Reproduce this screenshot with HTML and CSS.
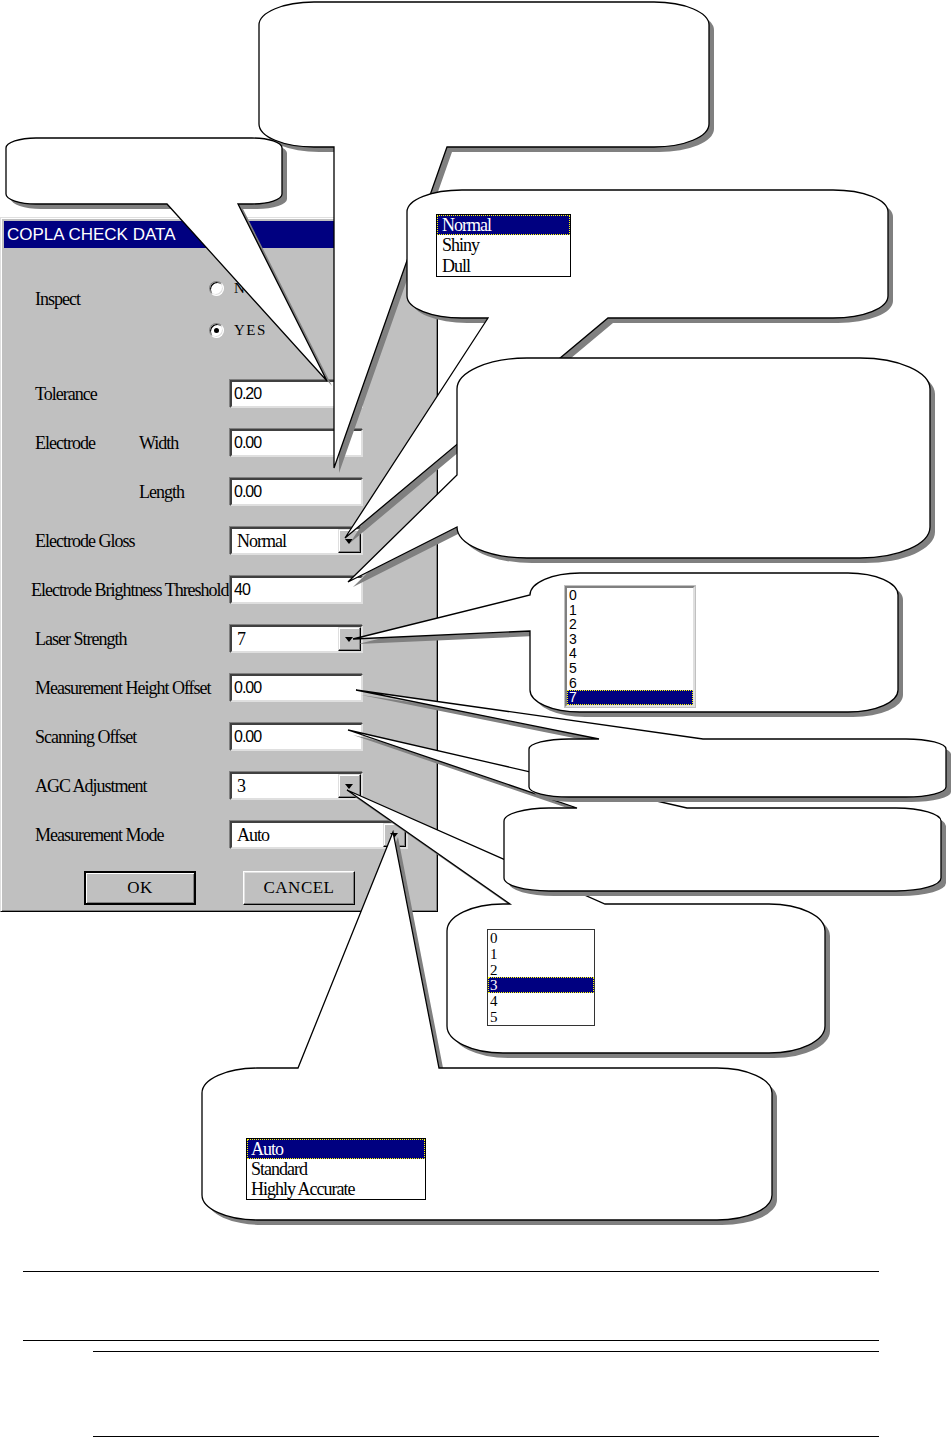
FILE: index.html
```html
<!DOCTYPE html>
<html lang="en">
<head>
  <meta charset="UTF-8" />
  <title>COPLA CHECK DATA</title>
  <link rel="stylesheet" href="styles.css">
</head>
<body>
  <div class="figure">
    <div class="dialog">
      <div class="titlebar">COPLA CHECK DATA</div>
      <div class="dlg-body">
        <div class="inspect-row">
          <span class="label inspect-label">Inspect</span>
          <div class="radios">
            <span class="radio"><span class="radio-dot"></span>NO</span>
            <span class="radio checked"><span class="radio-dot"></span>YES</span>
          </div>
        </div>

        <div class="fields">
          <span class="label">Tolerance</span>
          <div class="field">0.20</div>

          <span class="label"><span class="group">Electrode</span>Width</span>
          <div class="field">0.00</div>

          <span class="label sub">Length</span>
          <div class="field">0.00</div>

          <span class="label">Electrode Gloss</span>
          <div class="field select"><span class="value">Normal</span><span class="drop-btn"></span></div>

          <span class="label long">Electrode Brightness Threshold</span>
          <div class="field">40</div>

          <span class="label">Laser Strength</span>
          <div class="field select"><span class="value">7</span><span class="drop-btn"></span></div>

          <span class="label">Measurement Height Offset</span>
          <div class="field">0.00</div>

          <span class="label">Scanning Offset</span>
          <div class="field">0.00</div>

          <span class="label">AGC Adjustment</span>
          <div class="field select"><span class="value">3</span><span class="drop-btn"></span></div>

          <span class="label">Measurement Mode</span>
          <div class="field select wide"><span class="value">Auto</span><span class="drop-btn"></span></div>
        </div>

        <div class="buttons">
          <button class="btn default">OK</button>
          <button class="btn">CANCEL</button>
        </div>
      </div>
    </div>

    <!-- callout balloons drawn over the dialog -->
    <svg class="callouts" width="952" height="1240" viewBox="0 0 952 1240">
      <defs>
        <path id="c-top" d="M 314 2 H 654 A 55 23 0 0 1 709 25 V 124 A 55 23 0 0 1 654 147 H 447 L 334 468 L 334 147 H 314 A 55 23 0 0 1 259 124 V 25 A 55 23 0 0 1 314 2 Z" />
        <path id="c-tol" d="M 36 138 H 252 A 30 10 0 0 1 282 148 V 194 A 30 10 0 0 1 252 204 H 238 L 327 381 L 167 204 H 36 A 30 10 0 0 1 6 194 V 148 A 30 10 0 0 1 36 138 Z" />
        <path id="c-gloss" d="M 462 190 H 833 A 55 22 0 0 1 888 212 V 296 A 55 22 0 0 1 833 318 H 608 L 345 538 L 488 318 H 462 A 55 22 0 0 1 407 296 V 212 A 55 22 0 0 1 462 190 Z" />
        <path id="c-bright" d="M 527 358 H 860 A 70 31 0 0 1 930 389 V 527 A 70 31 0 0 1 860 558 H 527 A 70 31 0 0 1 457 527 L 348 582 L 457 475 V 389 A 70 31 0 0 1 527 358 Z" />
        <path id="c-laser" d="M 580 573 H 848 A 50 22 0 0 1 898 595 V 690 A 50 22 0 0 1 848 712 H 580 A 50 22 0 0 1 530 690 V 631 L 353 639 L 530 595 A 50 22 0 0 1 580 573 Z" />
        <path id="c-agc" d="M 503 904 H 510 L 347 790 L 605 904 H 769 A 56 27 0 0 1 825 931 V 1026 A 56 27 0 0 1 769 1053 H 503 A 56 27 0 0 1 447 1026 V 931 A 56 27 0 0 1 503 904 Z" />
        <path id="c-scan" d="M 549 808 H 577 L 348 730 L 687 808 H 896 A 45 13 0 0 1 941 821 V 878 A 45 13 0 0 1 896 891 H 549 A 45 13 0 0 1 504 878 V 821 A 45 13 0 0 1 549 808 Z" />
        <path id="c-height" d="M 569 739 H 599 L 356 690 L 703 739 H 906 A 40 10 0 0 1 946 749 V 787 A 40 10 0 0 1 906 797 H 569 A 40 10 0 0 1 529 787 V 749 A 40 10 0 0 1 569 739 Z" />
        <path id="c-mode" d="M 257 1068 H 298 L 393 832 L 439 1068 H 717 A 55 25 0 0 1 772 1093 V 1195 A 55 25 0 0 1 717 1220 H 257 A 55 25 0 0 1 202 1195 V 1093 A 55 25 0 0 1 257 1068 Z" />
      </defs>
      <use href="#c-top" class="shade" transform="translate(5 5)" /><use href="#c-top" class="bubble" />
      <use href="#c-tol" class="shade" transform="translate(5 5)" /><use href="#c-tol" class="bubble" />
      <use href="#c-gloss" class="shade" transform="translate(5 5)" /><use href="#c-gloss" class="bubble" />
      <use href="#c-bright" class="shade" transform="translate(5 5)" /><use href="#c-bright" class="bubble" />
      <use href="#c-laser" class="shade" transform="translate(5 5)" /><use href="#c-laser" class="bubble" />
      <use href="#c-agc" class="shade" transform="translate(5 5)" /><use href="#c-agc" class="bubble" />
      <use href="#c-scan" class="shade" transform="translate(5 5)" /><use href="#c-scan" class="bubble" />
      <use href="#c-height" class="shade" transform="translate(5 5)" /><use href="#c-height" class="bubble" />
      <use href="#c-mode" class="shade" transform="translate(5 5)" /><use href="#c-mode" class="bubble" />
    </svg>

    <ul class="list list-gloss">
      <li class="sel">Normal</li>
      <li>Shiny</li>
      <li>Dull</li>
    </ul>

    <ul class="list list-laser">
      <li>0</li><li>1</li><li>2</li><li>3</li><li>4</li><li>5</li><li>6</li>
      <li class="sel">7</li>
    </ul>

    <ul class="list list-agc">
      <li>0</li><li>1</li><li>2</li>
      <li class="sel">3</li>
      <li>4</li><li>5</li>
    </ul>

    <ul class="list list-mode">
      <li class="sel">Auto</li>
      <li>Standard</li>
      <li>Highly Accurate</li>
    </ul>
  </div>

  <div class="rules">
    <div class="rule wide"></div>
    <div class="rule wide gap-a"></div>
    <div class="rule inner gap-b"></div>
    <div class="rule inner gap-c"></div>
  </div>
</body>
</html>
```

FILE: styles.css
```css
body {
  margin: 0;
  background: #fff;
  color: #000;
  font-family: "Liberation Serif", "Times New Roman", serif;
}
.figure {
  position: relative;
  height: 1271px;
  padding-top: 217px;
  box-sizing: border-box;
}

/* dialog window */
.dialog {
  width: 438px;
  box-sizing: border-box;
  background: #c0c0c0;
  border: 1px solid;
  border-color: #dfdfdf #000 #000 #dfdfdf;
  box-shadow: inset 1px 1px #fff, inset -1px -1px #808080;
  padding: 3px;
}
.titlebar {
  height: 27px;
  line-height: 27px;
  background: #000080;
  color: #fff;
  font-family: "Liberation Sans", Arial, sans-serif;
  font-size: 17px;
  padding-left: 3px;
}
.dlg-body {
  padding: 30px 0 3px 31px;
}
.label {
  font-size: 18px;
  letter-spacing: -1px;
  line-height: 20px;
  white-space: nowrap;
}
.label .group {
  display: inline-block;
  width: 104px;
}
.label.sub {
  padding-left: 104px;
}
.label.long {
  margin-left: -4px;
}

.inspect-row {
  display: flex;
  height: 62px;
  margin-bottom: 40px;
}
.inspect-label {
  width: 174px;
  margin-top: 11px;
}
.radios {
  display: flex;
  flex-direction: column;
  gap: 22px;
}
.radio {
  display: flex;
  align-items: center;
  height: 20px;
  font-family: "Liberation Serif", "Times New Roman", serif;
  font-size: 15px;
  letter-spacing: 1.5px;
}
.radio-dot {
  position: relative;
  width: 15px;
  height: 15px;
  box-sizing: border-box;
  border-radius: 50%;
  background: #fff;
  border: 1px solid;
  border-color: #808080 #fff #fff #808080;
  box-shadow: inset 1px 1px #000, inset -1px -1px #dfdfdf;
  margin-right: 10px;
}
.radio.checked .radio-dot::after {
  content: "";
  position: absolute;
  left: 4px;
  top: 4px;
  width: 5px;
  height: 5px;
  border-radius: 50%;
  background: #000;
}

.fields {
  display: grid;
  grid-template-columns: 195px auto;
  grid-auto-rows: 28px;
  row-gap: 21px;
  align-items: center;
  justify-items: start;
}
.field {
  width: 133px;
  height: 28px;
  box-sizing: border-box;
  background: #fff;
  border: 2px solid;
  border-color: #404040 #dfdfdf #dfdfdf #404040;
  box-shadow: -1px -1px #808080;
  padding-left: 2px;
  font-family: "Liberation Sans", Arial, sans-serif;
  font-size: 16px;
  letter-spacing: -1px;
  line-height: 24px;
}
.select {
  display: flex;
}
.select .value {
  flex: 1;
  padding-left: 3px;
  font-family: "Liberation Serif", "Times New Roman", serif;
  font-size: 18px;
}
.select.wide {
  width: 178px;
}
.drop-btn {
  position: relative;
  width: 23px;
  height: 24px;
  box-sizing: border-box;
  background: #c0c0c0;
  border: 1px solid;
  border-color: #dfdfdf #000 #000 #dfdfdf;
  box-shadow: inset -1px -1px #808080, inset 1px 1px #fff;
}
.drop-btn::after {
  content: "";
  position: absolute;
  left: 6px;
  top: 9px;
  border-left: 4px solid transparent;
  border-right: 4px solid transparent;
  border-top: 5px solid #000;
}

.buttons {
  display: flex;
  gap: 47px;
  margin-top: 22px;
  padding-left: 49px;
}
.btn {
  width: 112px;
  height: 34px;
  box-sizing: border-box;
  background: #c0c0c0;
  font-family: "Liberation Serif", "Times New Roman", serif;
  font-size: 17px;
  letter-spacing: 0.5px;
  color: #000;
  padding: 0;
  border: 1px solid;
  border-color: #fff #000 #000 #fff;
  box-shadow: inset -1px -1px #808080, inset 1px 1px #dfdfdf;
}
.btn.default {
  border: 2px solid #000;
  box-shadow: inset 1px 1px #fff, inset -1px -1px #808080;
}

/* callouts */
.callouts {
  position: absolute;
  left: 0;
  top: 0;
}
.shade {
  fill: #808080;
}
.bubble {
  fill: #fff;
  stroke: #000;
  stroke-width: 1.3;
}

/* dropped-down lists shown inside callouts */
.list {
  position: absolute;
  margin: 0;
  padding: 0;
  list-style: none;
  background: #fff;
  box-sizing: border-box;
  border: 1px solid #000;
}
.list li {
  white-space: nowrap;
}
.list .sel {
  background: #000080;
  color: #fff;
  outline: 1px dotted #ffff00;
  outline-offset: -1px;
}
.list-gloss {
  left: 436px;
  top: 214px;
  width: 135px;
  height: 63px;
  font-size: 18px;
  letter-spacing: -1px;
}
.list-gloss li {
  height: 20.3px;
  line-height: 20px;
  padding-left: 5px;
}
.list-laser {
  left: 565px;
  top: 586px;
  width: 130px;
  height: 121px;
  border: 2px solid;
  border-color: #808080 #dfdfdf #dfdfdf #808080;
  box-shadow: 0 0 0 1px #c0c0c0;
  font-family: "Liberation Sans", Arial, sans-serif;
  font-size: 14px;
}
.list-laser li {
  height: 14.6px;
  line-height: 15px;
  padding-left: 2px;
}
.list-agc {
  left: 487px;
  top: 929px;
  width: 108px;
  height: 97px;
  border-color: #333;
  font-size: 15px;
}
.list-agc li {
  height: 15.8px;
  line-height: 16px;
  padding-left: 2px;
}
.list-mode {
  left: 246px;
  top: 1138px;
  width: 180px;
  height: 62px;
  font-size: 18px;
  letter-spacing: -1px;
}
.list-mode li {
  height: 20px;
  line-height: 20px;
  padding-left: 4px;
}

/* ruled lines below the figure */
.rules {
  padding-bottom: 1px;
}
.rule {
  border-top: 1px solid #000;
}
.rule.wide {
  margin-left: 23px;
  width: 856px;
}
.rule.inner {
  margin-left: 93px;
  width: 786px;
}
.gap-a {
  margin-top: 68px;
}
.gap-b {
  margin-top: 10px;
}
.gap-c {
  margin-top: 84px;
}
```
